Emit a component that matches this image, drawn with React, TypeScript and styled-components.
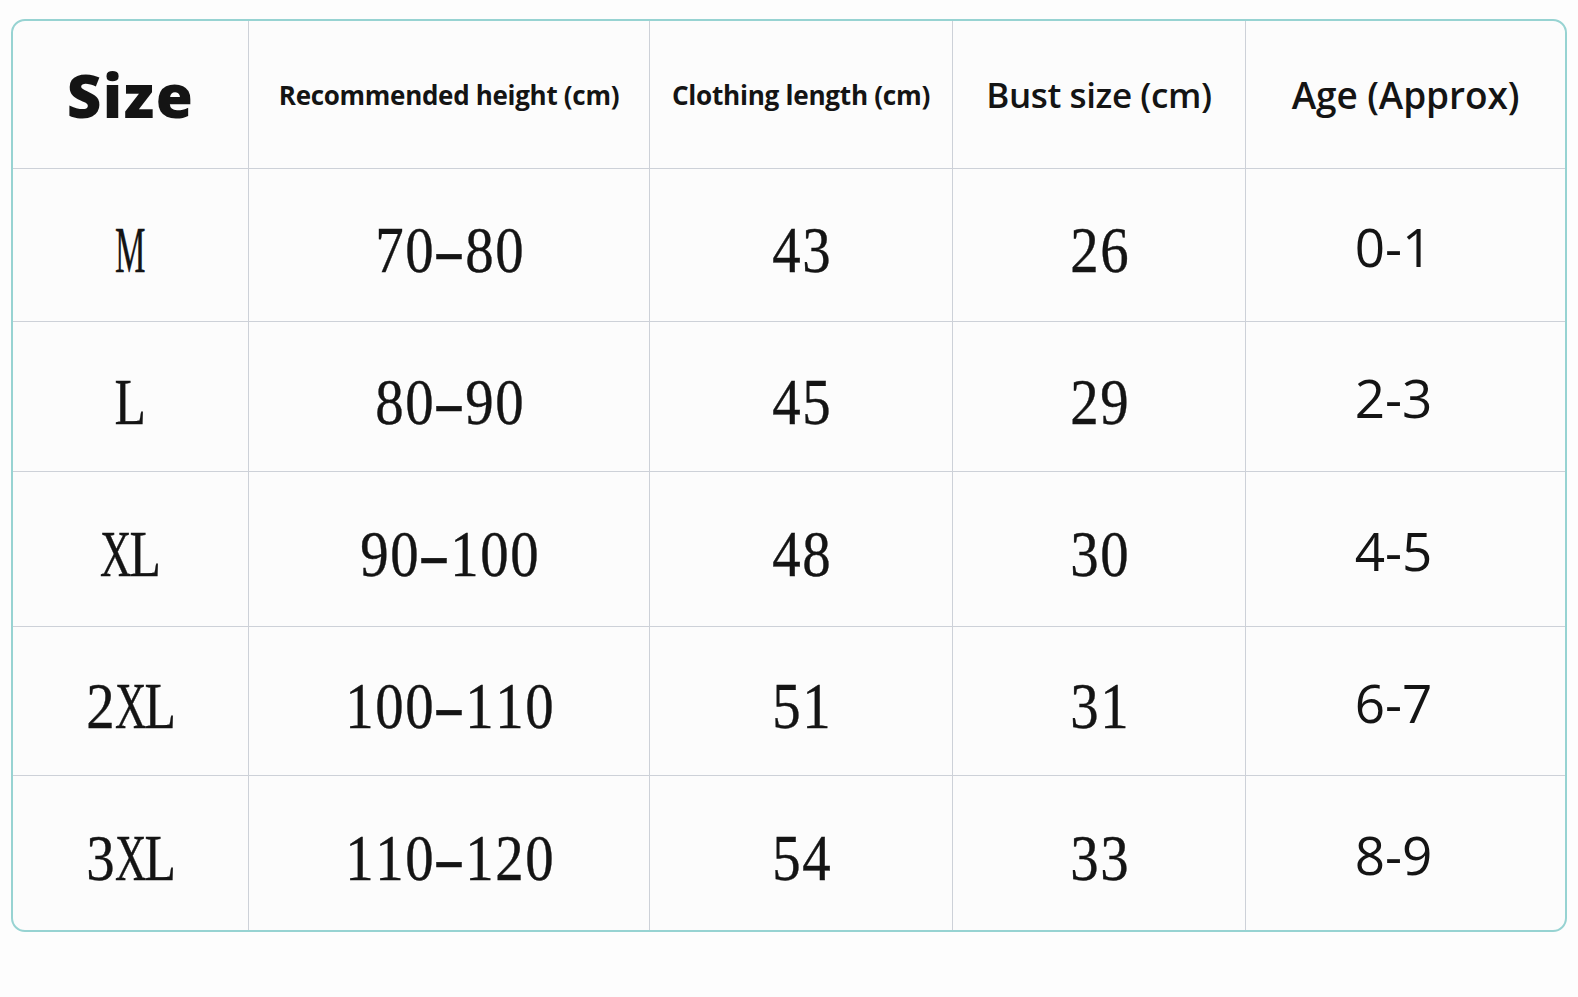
import React from 'react';
import styled, { createGlobalStyle } from 'styled-components';

const GlobalStyle = createGlobalStyle`
  html, body {
    margin: 0;
    padding: 0;
    background: #fdfdfd;
    overflow: hidden;
  }
  body {
    font-family: 'Open Sans', 'Liberation Sans', sans-serif;
    color: #121212;
  }
`;

// each glyph of the serif figures sits in a fixed 30px slot, squeezed to fit
const GLYPH_SCALE: Record<string, number> = {
  M: 0.52,
  X: 0.66,
  L: 0.78,
  '-': 1.45,
};

const HEADERS = [
  { title: 'Size', size: 60, weight: 800, spacing: 1.5 },
  { title: 'Recommended height (cm)', size: 26, weight: 700, spacing: -0.3 },
  { title: 'Clothing length (cm)', size: 26.2, weight: 700, spacing: -0.3 },
  { title: 'Bust size (cm)', size: 35, weight: 600, spacing: -0.4 },
  { title: 'Age (Approx)', size: 37, weight: 600, spacing: -0.1 },
];

const ROWS = [
  ['M', '70-80', '43', '26', '0-1'],
  ['L', '80-90', '45', '29', '2-3'],
  ['XL', '90-100', '48', '30', '4-5'],
  ['2XL', '100-110', '51', '31', '6-7'],
  ['3XL', '110-120', '54', '33', '8-9'],
];

const Page = styled.div`
  padding: 19px 0 0 11px;
`;

const Table = styled.div`
  width: 1552px;
  height: 909px;
  border: 2px solid #97d3d2;
  border-radius: 14px;
  overflow: hidden;
  background: #fcfcfc;
  display: grid;
  grid-template-columns: 236px 401px 303px 293px 319px;
  grid-template-rows: 148px 153px 150px 155px 149px 154px;

  & > div:nth-child(5n) {
    border-right: none;
  }
  & > div:nth-last-child(-n + 5) {
    border-bottom: none;
  }
`;

const Cell = styled.div`
  display: flex;
  align-items: center;
  justify-content: center;
  border-right: 1.5px solid #cdd1d8;
  border-bottom: 1.5px solid #cdd1d8;
  min-width: 0;
`;

const HeadText = styled.span<{ $size: number; $weight: number; $spacing: number }>`
  font-family: 'Open Sans', 'Liberation Sans', sans-serif;
  color: #141414;
  white-space: nowrap;
  font-size: ${(p) => p.$size}px;
  font-weight: ${(p) => p.$weight};
  letter-spacing: ${(p) => p.$spacing}px;
`;

const SerifFigure = styled.span`
  display: flex;
  margin-top: 10px;
  font-family: 'Liberation Serif', 'Times New Roman', serif;
  font-size: 66px;
  line-height: 1;
  color: #141414;
`;

const Slot = styled.span`
  width: 30px;
  display: flex;
  justify-content: center;
`;

const Glyph = styled.span<{ $sx: number }>`
  display: inline-block;
  transform: scaleX(${(p) => p.$sx});
  -webkit-text-stroke: 0.4px #141414;
`;

const AgeText = styled.span`
  font-family: 'Open Sans', 'Liberation Sans', sans-serif;
  font-size: 53px;
  font-weight: 500;
  color: #141414;
  margin-top: 2px;
  margin-right: 24px;
`;

const Figure: React.FC<{ value: string }> = ({ value }) => (
  <SerifFigure>
    {value.split('').map((ch, i) => (
      <Slot key={i}>
        <Glyph $sx={GLYPH_SCALE[ch] ?? 0.86}>{ch}</Glyph>
      </Slot>
    ))}
  </SerifFigure>
);

export default function App() {
  return (
    <Page>
      <GlobalStyle />
      <Table>
        {HEADERS.map((h) => (
          <Cell key={h.title}>
            <HeadText $size={h.size} $weight={h.weight} $spacing={h.spacing}>
              {h.title}
            </HeadText>
          </Cell>
        ))}
        {ROWS.map((row) =>
          row.map((value, col) => (
            <Cell key={`${row[0]}-${col}`}>
              {col === 4 ? <AgeText>{value}</AgeText> : <Figure value={value} />}
            </Cell>
          ))
        )}
      </Table>
    </Page>
  );
}
